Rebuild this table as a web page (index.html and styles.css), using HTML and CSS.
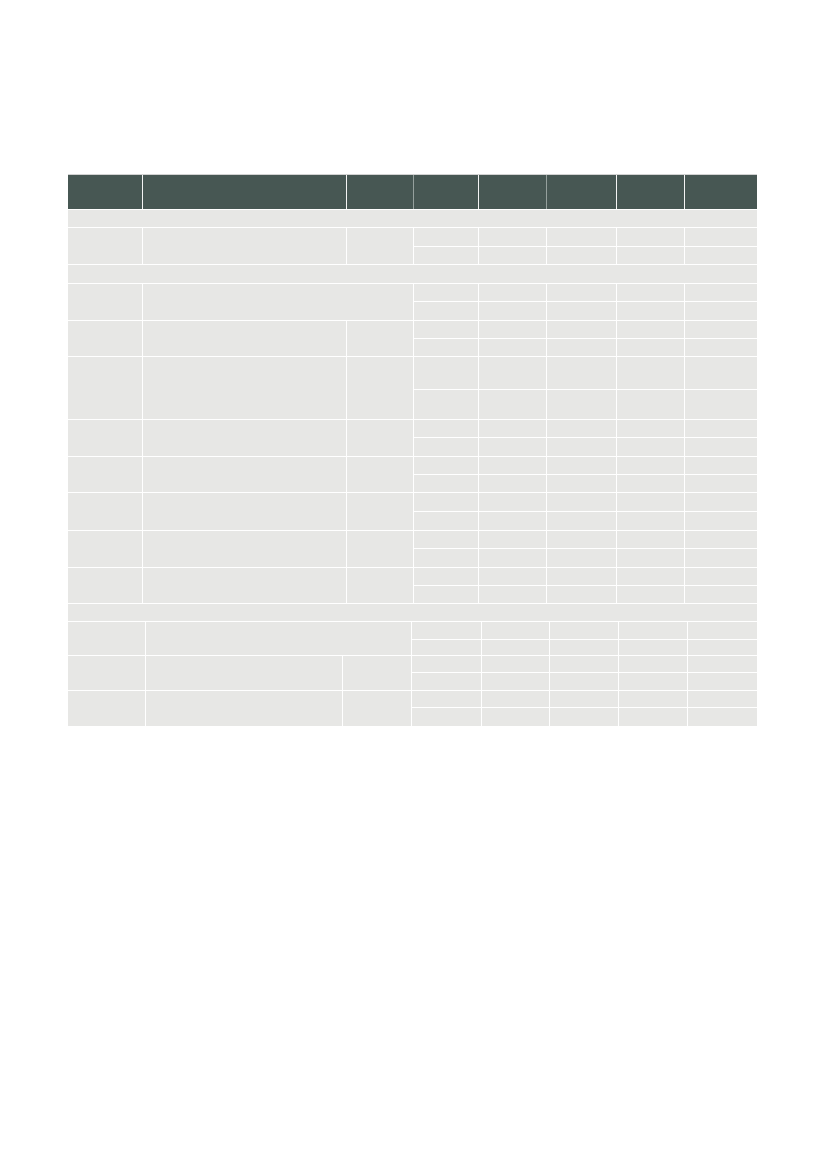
FILE: index.html
```html
<!DOCTYPE html>
<html>
<head>
<meta charset="utf-8">
<link rel="stylesheet" href="styles.css">
</head>
<body>
<div class="page">
  <div class="table-top">
    <div class="head">
      <div class="hc"></div><div class="hc"></div><div class="hc"></div><div class="hc alt"></div>
      <div class="hc"></div><div class="hc alt"></div><div class="hc"></div><div class="hc"></div>
    </div>
    <div class="grid1">
      <div class="c section" style="grid-row:1"></div>

      <div class="c" style="grid-row:2/4;grid-column:1"></div>
      <div class="c" style="grid-row:2/4;grid-column:2"></div>
      <div class="c" style="grid-row:2/4;grid-column:3"></div>
      <div class="c"></div><div class="c"></div><div class="c"></div><div class="c"></div><div class="c"></div>
      <div class="c"></div><div class="c"></div><div class="c"></div><div class="c"></div><div class="c"></div>

      <div class="c section" style="grid-row:4"></div>

      <div class="c" style="grid-row:5/7;grid-column:1"></div>
      <div class="c" style="grid-row:5/7;grid-column:2/4"></div>
      <div class="c"></div><div class="c"></div><div class="c"></div><div class="c"></div><div class="c"></div>
      <div class="c"></div><div class="c"></div><div class="c"></div><div class="c"></div><div class="c"></div>

      <div class="c" style="grid-row:7/9;grid-column:1"></div>
      <div class="c" style="grid-row:7/9;grid-column:2"></div>
      <div class="c" style="grid-row:7/9;grid-column:3"></div>
      <div class="c"></div><div class="c"></div><div class="c"></div><div class="c"></div><div class="c"></div>
      <div class="c"></div><div class="c"></div><div class="c"></div><div class="c"></div><div class="c"></div>

      <div class="c" style="grid-row:9/11;grid-column:1"></div>
      <div class="c" style="grid-row:9/11;grid-column:2"></div>
      <div class="c" style="grid-row:9/11;grid-column:3"></div>
      <div class="c"></div><div class="c"></div><div class="c"></div><div class="c"></div><div class="c"></div>
      <div class="c"></div><div class="c"></div><div class="c"></div><div class="c"></div><div class="c"></div>

      <div class="c" style="grid-row:11/13;grid-column:1"></div>
      <div class="c" style="grid-row:11/13;grid-column:2"></div>
      <div class="c" style="grid-row:11/13;grid-column:3"></div>
      <div class="c"></div><div class="c"></div><div class="c"></div><div class="c"></div><div class="c"></div>
      <div class="c"></div><div class="c"></div><div class="c"></div><div class="c"></div><div class="c"></div>

      <div class="c" style="grid-row:13/15;grid-column:1"></div>
      <div class="c" style="grid-row:13/15;grid-column:2"></div>
      <div class="c" style="grid-row:13/15;grid-column:3"></div>
      <div class="c"></div><div class="c"></div><div class="c"></div><div class="c"></div><div class="c"></div>
      <div class="c"></div><div class="c"></div><div class="c"></div><div class="c"></div><div class="c"></div>

      <div class="c" style="grid-row:15/17;grid-column:1"></div>
      <div class="c" style="grid-row:15/17;grid-column:2"></div>
      <div class="c" style="grid-row:15/17;grid-column:3"></div>
      <div class="c"></div><div class="c"></div><div class="c"></div><div class="c"></div><div class="c"></div>
      <div class="c"></div><div class="c"></div><div class="c"></div><div class="c"></div><div class="c"></div>

      <div class="c" style="grid-row:17/19;grid-column:1"></div>
      <div class="c" style="grid-row:17/19;grid-column:2"></div>
      <div class="c" style="grid-row:17/19;grid-column:3"></div>
      <div class="c"></div><div class="c"></div><div class="c"></div><div class="c"></div><div class="c"></div>
      <div class="c"></div><div class="c"></div><div class="c"></div><div class="c"></div><div class="c"></div>

      <div class="c" style="grid-row:19/21;grid-column:1"></div>
      <div class="c" style="grid-row:19/21;grid-column:2"></div>
      <div class="c" style="grid-row:19/21;grid-column:3"></div>
      <div class="c"></div><div class="c"></div><div class="c"></div><div class="c"></div><div class="c"></div>
      <div class="c"></div><div class="c"></div><div class="c"></div><div class="c"></div><div class="c"></div>

      <div class="c section" style="grid-row:21"></div>
    </div>
  </div>

  <div class="grid2">
    <div class="c" style="grid-row:1/3;grid-column:1"></div>
    <div class="c" style="grid-row:1/3;grid-column:2/4"></div>
    <div class="c"></div><div class="c"></div><div class="c"></div><div class="c"></div><div class="c"></div>
    <div class="c"></div><div class="c"></div><div class="c"></div><div class="c"></div><div class="c"></div>

    <div class="c" style="grid-row:3/5;grid-column:1"></div>
    <div class="c" style="grid-row:3/5;grid-column:2"></div>
    <div class="c" style="grid-row:3/5;grid-column:3"></div>
    <div class="c"></div><div class="c"></div><div class="c"></div><div class="c"></div><div class="c"></div>
    <div class="c"></div><div class="c"></div><div class="c"></div><div class="c"></div><div class="c"></div>

    <div class="c" style="grid-row:5/7;grid-column:1"></div>
    <div class="c" style="grid-row:5/7;grid-column:2"></div>
    <div class="c" style="grid-row:5/7;grid-column:3"></div>
    <div class="c"></div><div class="c"></div><div class="c"></div><div class="c"></div><div class="c"></div>
    <div class="c"></div><div class="c"></div><div class="c"></div><div class="c"></div><div class="c"></div>
  </div>
</div>
</body>
</html>
```

FILE: styles.css
```css
html, body {
  margin: 0;
  padding: 0;
  background: #ffffff;
  font-family: "Liberation Sans", Arial, sans-serif;
}

.page {
  padding: 174px 0 0 68px;
  width: 689px;
}

.table-top {
  border-top: 1px solid #d2d2d2;
  background: #ffffff;
  display: flex;
  flex-direction: column;
  gap: 1px;
}

.head {
  display: grid;
  grid-template-columns: 74px 203px 66px 64px 67px 69px 67px 72px;
  grid-template-rows: 34px;
  column-gap: 1px;
  background: #f4f4f4;
}

.hc {
  background: #475753;
}

.hc.alt {
  box-shadow: -1px 0 0 #95a09d;
}

.grid1 {
  display: grid;
  grid-template-columns: 74px 203px 66px 64px 67px 69px 67px 72px;
  grid-template-rows: 17px 18px 17px 18px 17px 18px 17px 17px 32px 29px 17px 18px 17px 17px 18px 18px 17px 18px 17px 17px 17px;
  gap: 1px;
  background: #ffffff;
}

.grid2 {
  margin-top: 1px;
  display: grid;
  grid-template-columns: 77px 196px 68px 69px 67px 68px 68px 69px;
  grid-template-rows: 17px 15px 16px 17px 16px 18px;
  gap: 1px;
  background: #ffffff;
}

.c {
  background: #e7e7e5;
}

.c.section {
  grid-column: 1 / -1;
}
```
